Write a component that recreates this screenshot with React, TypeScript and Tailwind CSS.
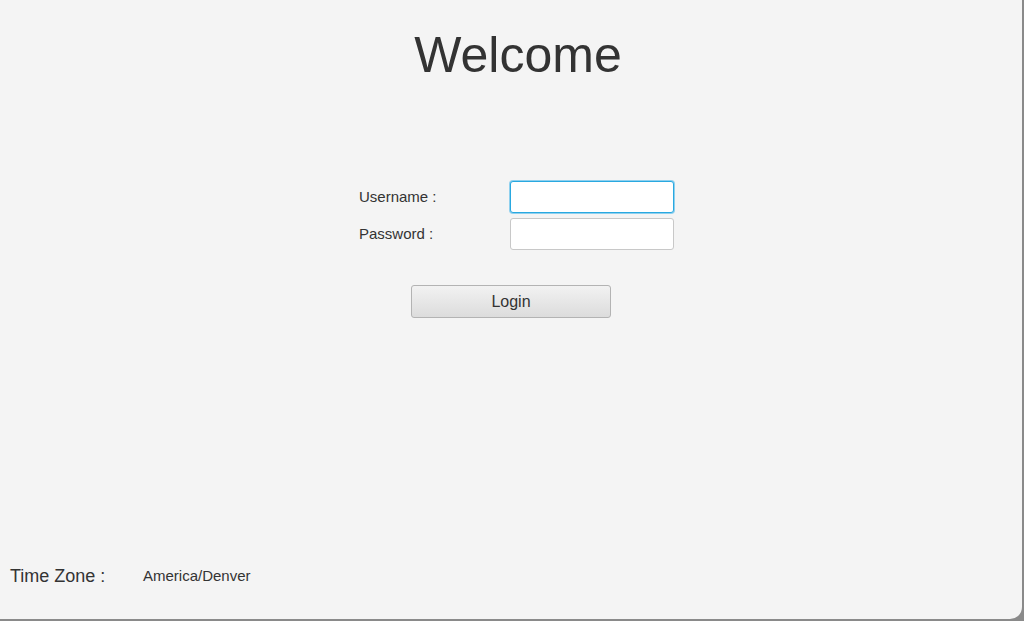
export default function App() {
  const font = { fontFamily: '"Liberation Sans", Arial, sans-serif' };
  return (
    <div className="w-[1024px] h-[621px] bg-[#8a8a8a] overflow-hidden" style={font}>
      <div className="w-[1022px] h-[619px] bg-[#f4f4f4] rounded-br-[12px] flex flex-col text-[#333]">
        <div className="h-[112px] flex justify-center pt-[22px]">
          <h1 className="text-[50px] leading-[66px] ml-[14px]">Welcome</h1>
        </div>
        <div className="mt-[69px] ml-[359px] flex flex-col gap-[5px]">
          <div className="flex items-center h-[32px]">
            <span className="w-[151px] text-[15px]">Username :</span>
            <input className="w-[164px] h-[32px] bg-white rounded-[3px] border border-[#29a8e0] outline-none shadow-[0_0_0_1px_#8fd0ee]" />
          </div>
          <div className="flex items-center h-[32px]">
            <span className="w-[151px] text-[15px]">Password :</span>
            <input type="password" className="w-[164px] h-[32px] bg-white rounded-[3px] border border-[#c8c8c8] outline-none" />
          </div>
        </div>
        <div className="mt-[35px] ml-[411px]">
          <button className="w-[200px] h-[33px] rounded-[3px] border border-[#b3b3b3] bg-gradient-to-b from-[#f2f2f2] to-[#dcdcdc] text-[16px] text-[#333]">Login</button>
        </div>
        <div className="mt-auto mb-[29px] ml-[10px] flex items-center">
          <span className="w-[133px] text-[18px]">Time Zone :</span>
          <span className="text-[15px]">America/Denver</span>
        </div>
      </div>
    </div>
  );
}
